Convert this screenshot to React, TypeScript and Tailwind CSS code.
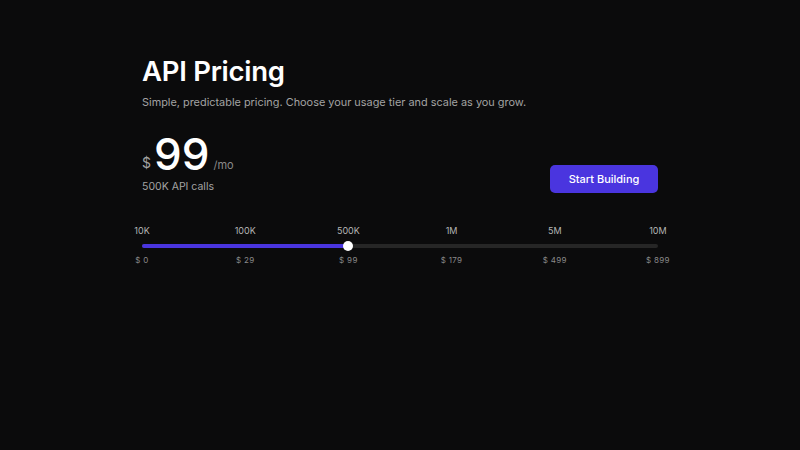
const tiers = [
  { calls: "10K", price: "$ 0" },
  { calls: "100K", price: "$ 29" },
  { calls: "500K", price: "$ 99" },
  { calls: "1M", price: "$ 179" },
  { calls: "5M", price: "$ 499" },
  { calls: "10M", price: "$ 899" },
];

export default function App() {
  const active = 2;
  const pct = (active / (tiers.length - 1)) * 100;

  return (
    <div
      className="min-h-[450px] w-full bg-[#0b0b0c] text-white"
      style={{ fontFamily: "Inter, 'Noto Sans', sans-serif" }}
    >
      <div className="mx-auto w-[516px] pt-[52px]">
        <h1 className="text-[27.5px] font-semibold leading-[38px] tracking-[-0.01em]">API Pricing</h1>
        <p className="mt-[4px] text-[10.9px] text-[#a3a3a3]">
          Simple, predictable pricing. Choose your usage tier and scale as you grow.
        </p>

        <div className="mt-[22px] flex items-end justify-between">
          <div>
            <div className="flex items-end">
              <span className="mb-[3px] text-[14px] text-[#a3a3a3]">$</span>
              <span className="ml-[3px] text-[44px] font-medium leading-[44px]">99</span>
              <span className="mb-[3px] ml-[4px] text-[11px] text-[#8a8a8a]">/mo</span>
            </div>
            <div className="mt-[3px] text-[10.5px] leading-[16px] text-[#a3a3a3]">500K API calls</div>
          </div>
          <button className="mb-[2px] h-[28px] w-[108px] rounded-[5px] bg-[#4a35df] text-[11px] font-medium text-white">
            Start Building
          </button>
        </div>

        <div className="mt-[29px]">
          <div className="-mx-[20px] flex justify-between">
            {tiers.map((t) => (
              <span key={t.calls} className="w-[40px] text-center text-[9px] leading-[13px] text-[#b5b5b5]">
                {t.calls}
              </span>
            ))}
          </div>
          <div className="relative mt-[7px] h-[4px] rounded-full bg-[#262626]">
            <div className="h-full rounded-full bg-[#4a35df]" style={{ width: `${pct}%` }} />
            <div
              className="absolute top-1/2 h-[10px] w-[10px] -translate-x-1/2 -translate-y-1/2 rounded-full bg-white"
              style={{ left: `${pct}%` }}
            />
          </div>
          <div className="-mx-[20px] mt-[6px] flex justify-between">
            {tiers.map((t) => (
              <span key={t.price} className="w-[40px] text-center text-[8px] tracking-[0.04em] text-[#8a8a8a]">
                {t.price}
              </span>
            ))}
          </div>
        </div>
      </div>
    </div>
  );
}
